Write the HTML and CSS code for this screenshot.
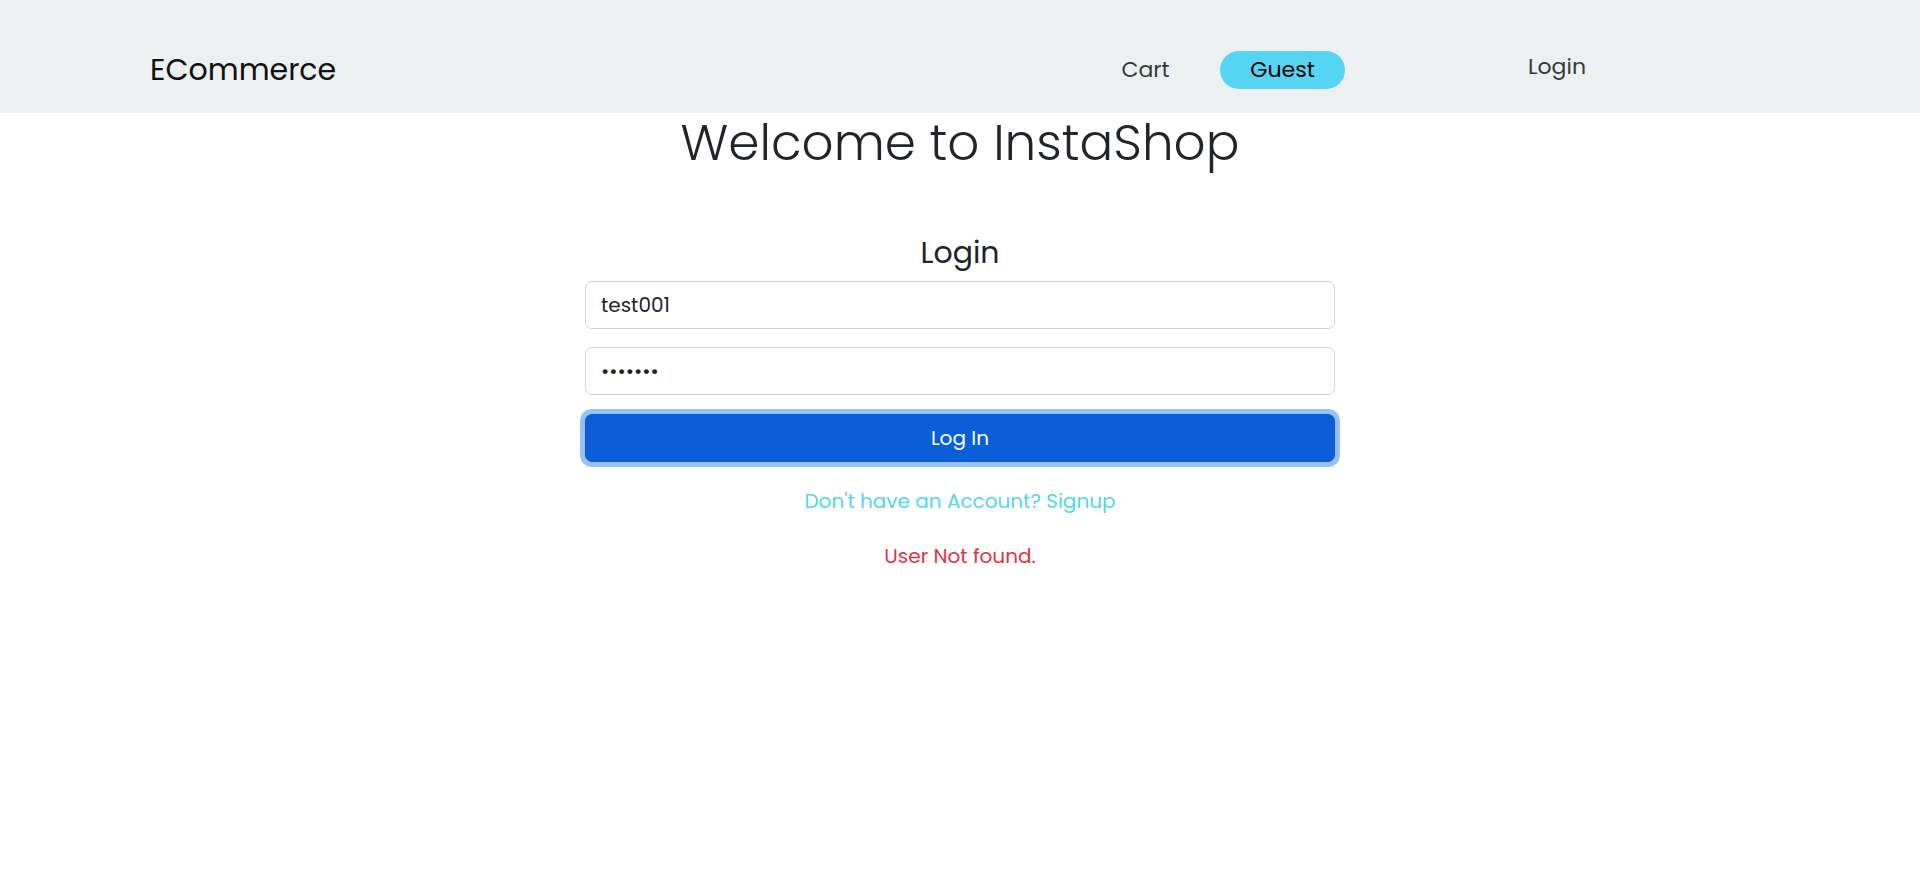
FILE: index.html
```html
<!DOCTYPE html>
<html lang="en">
<head>
<meta charset="utf-8">
<title>InstaShop</title>
<link rel="stylesheet" href="styles.css">
</head>
<body>
<header class="navbar">
  <div class="nav-inner">
    <a class="brand" href="#">ECommerce</a>
    <nav class="menu">
      <a class="nav-link cart" href="#">Cart</a>
      <span class="guest">Guest</span>
      <a class="nav-link login" href="#">Login</a>
    </nav>
  </div>
</header>
<main class="page">
  <h1 class="title">Welcome to InstaShop</h1>
  <form class="login-form">
    <h2 class="form-title">Login</h2>
    <input class="field field-first" type="text" value="test001">
    <input class="field" type="password" value="1234567">
    <button class="btn" type="button">Log In</button>
    <a class="signup" href="#">Don't have an Account? Signup</a>
    <p class="error">User Not found.</p>
  </form>
</main>
</body>
</html>
```
FILE: styles.css
```css
* { box-sizing: border-box; }

html, body {
  margin: 0;
  padding: 0;
  background: #ffffff;
  font-family: "Poppins", "Inter", "Noto Sans", sans-serif;
  color: #212529;
}

a { text-decoration: none; }

.navbar {
  background: #ecf0f1;
  height: 113px;
}

.nav-inner {
  display: flex;
  align-items: flex-start;
  padding: 51px 150px 0 150px;
}

.brand {
  font-size: 30px;
  line-height: 38px;
  color: #111111;
}

.menu {
  margin-left: auto;
  margin-right: 174px;
  display: flex;
  align-items: flex-start;
}

.nav-link {
  font-size: 22px;
  color: #34393e;
  text-align: center;
}

.cart {
  width: 67px;
  line-height: 38px;
}

.guest {
  margin-left: 41px;
  width: 125px;
  height: 38px;
  line-height: 38px;
  border-radius: 19px;
  background: #55d5f1;
  color: #000000;
  font-size: 22px;
  text-align: center;
}

.login {
  margin-left: 173px;
  width: 78px;
  line-height: 32px;
}

.page {
  display: flex;
  flex-direction: column;
  align-items: center;
}

.title {
  margin: 0;
  font-size: 50px;
  line-height: 60px;
  font-weight: 300;
  color: #212529;
}

.login-form {
  width: 750px;
  margin-top: 61px;
  display: flex;
  flex-direction: column;
  align-items: center;
}

.form-title {
  margin: 0 0 10px 0;
  font-size: 30px;
  line-height: 37px;
  font-weight: 400;
  color: #212529;
}

.field {
  width: 100%;
  height: 48px;
  margin: 0 0 18px 0;
  padding: 0 15px;
  border: 1px solid #ced4da;
  border-radius: 7px;
  font-family: inherit;
  font-size: 20px;
  color: #212529;
  background: #ffffff;
  outline: none;
}

.field[type="password"] {
  margin-bottom: 19px;
}

.btn {
  width: 100%;
  height: 48px;
  border: 1px solid #0a58ca;
  border-radius: 7px;
  background: #0b5ed7;
  color: #ffffff;
  font-family: inherit;
  font-size: 20px;
  box-shadow: 0 0 0 5px #98c1fc;
  cursor: pointer;
}

.signup {
  margin-top: 24px;
  font-size: 20px;
  line-height: 30px;
  color: #55d5f1;
}

.error {
  margin: 25px 0 0 0;
  font-size: 20px;
  line-height: 30px;
  color: #dc3545;
}
```
